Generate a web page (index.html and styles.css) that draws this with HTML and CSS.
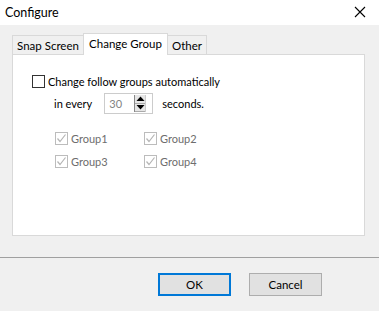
FILE: index.html
```html
<!DOCTYPE html>
<html>
<head>
<meta charset="utf-8">
<link rel="stylesheet" href="styles.css">
</head>
<body>
<div class="window">
  <div class="titlebar">
    <span class="title">Configure</span>
    <svg class="close" width="12" height="12" viewBox="0 0 12 12"><path d="M1 1L11 11M11 1L1 11" stroke="#000" stroke-width="1.1"/></svg>
  </div>
  <div class="content">
    <div class="tabs">
      <div class="tab t1">Snap Screen</div>
      <div class="tab active">Change Group</div>
      <div class="tab t3">Other</div>
    </div>
    <div class="panel">
      <div class="row main-row">
        <span class="cb"></span>
        <span class="label">Change follow groups automatically</span>
      </div>
      <div class="row every-row">
        <span class="label">in every</span>
        <div class="spin">
          <span class="spin-val">30</span>
          <div class="spin-btns">
            <span class="sb"><svg width="9" height="5" viewBox="0 0 9 5"><path d="M0.5 5L4.5 0.5L8.5 5Z" fill="#000"/></svg></span>
            <span class="sb"><svg width="9" height="5" viewBox="0 0 9 5"><path d="M0.5 0L4.5 4.5L8.5 0Z" fill="#000"/></svg></span>
          </div>
        </div>
        <span class="label">seconds.</span>
      </div>
      <div class="groups">
        <div class="g"><span class="cb dis"><svg width="11" height="11" viewBox="0 0 11 11"><path d="M1.5 5.5L4 8.5L9.5 1.5" stroke="#b5b5b5" stroke-width="1.2" fill="none"/></svg></span><span class="glabel">Group1</span></div>
        <div class="g"><span class="cb dis"><svg width="11" height="11" viewBox="0 0 11 11"><path d="M1.5 5.5L4 8.5L9.5 1.5" stroke="#b5b5b5" stroke-width="1.2" fill="none"/></svg></span><span class="glabel">Group2</span></div>
        <div class="g"><span class="cb dis"><svg width="11" height="11" viewBox="0 0 11 11"><path d="M1.5 5.5L4 8.5L9.5 1.5" stroke="#b5b5b5" stroke-width="1.2" fill="none"/></svg></span><span class="glabel">Group3</span></div>
        <div class="g"><span class="cb dis"><svg width="11" height="11" viewBox="0 0 11 11"><path d="M1.5 5.5L4 8.5L9.5 1.5" stroke="#b5b5b5" stroke-width="1.2" fill="none"/></svg></span><span class="glabel">Group4</span></div>
      </div>
    </div>
  </div>
  <div class="footer">
    <button class="btn ok">OK</button>
    <button class="btn">Cancel</button>
  </div>
</div>
</body>
</html>
```

FILE: styles.css
```css
html, body {
  margin: 0;
  padding: 0;
}
body {
  width: 379px;
  height: 311px;
  overflow: hidden;
  background: #f0f0f0;
  font-family: "Lato", "Noto Sans", sans-serif;
  font-size: 11px;
  color: #000;
}
.window {
  display: flex;
  flex-direction: column;
  height: 311px;
}
.titlebar {
  height: 25px;
  background: #fff;
  display: flex;
  align-items: center;
  justify-content: space-between;
  padding: 0 13px 1px 5px;
  box-sizing: border-box;
}
.title {
  font-size: 12.5px;
}
.content {
  padding: 8px 14px 0 12px;
}
.tabs {
  display: flex;
  align-items: flex-end;
  height: 21px;
  position: relative;
  z-index: 1;
}
.tab {
  height: 19px;
  box-sizing: border-box;
  border: 1px solid #d9d9d9;
  border-bottom: none;
  background: #f0f0f0;
  display: flex;
  align-items: center;
  justify-content: center;
  line-height: 1;
  padding-top: 2px;
  font-size: 11.5px;
}
.t1 { width: 71px; border-right: none; }
.t3 { width: 39px; border-left: none; }
.tab.active {
  height: 22px;
  width: 85px;
  background: #fff;
  margin-bottom: -1px;
  padding-top: 0;
  padding-bottom: 2px;
}
.panel {
  height: 182px;
  box-sizing: border-box;
  background: #fff;
  border: 1px solid #d9d9d9;
  position: relative;
  padding: 20px 0 0 19px;
}
.row {
  display: flex;
  align-items: center;
  height: 13px;
}
.cb {
  width: 13px;
  height: 13px;
  box-sizing: border-box;
  border: 1px solid #333;
  background: #fff;
  display: inline-flex;
  align-items: center;
  justify-content: center;
  flex: none;
}
.cb.dis {
  border-color: #bcbcbc;
}
.main-row .label {
  margin-left: 3px;
}
.every-row {
  margin-top: 5px;
  height: 21px;
  padding-left: 22px;
}
.spin {
  margin-left: 12px;
  width: 49px;
  height: 21px;
  box-sizing: border-box;
  border: 1px solid #cccccc;
  display: flex;
  align-items: center;
  justify-content: space-between;
  padding: 0 6px 0 4px;
  margin-right: 9px;
}
.spin-val {
  color: #838383;
}
.spin-btns {
  display: flex;
  flex-direction: column;
  border-left: 1px solid #888;
  border-right: 1px solid #ccc;
  height: 17px;
  width: 12px;
  box-sizing: border-box;
}
.sb {
  flex: 1;
  display: flex;
  align-items: center;
  justify-content: center;
  background: #e6e6e6;
  border-bottom: 1px solid #aaa;
}
.groups {
  display: grid;
  grid-template-columns: 89px 80px;
  grid-auto-rows: 13px;
  row-gap: 10px;
  margin-top: 18px;
  padding-left: 23px;
}
.g {
  display: flex;
  align-items: center;
}
.glabel {
  margin-left: 3px;
  color: #6d6d6d;
}
.footer {
  margin-top: 21px;
  border-top: 1px solid #a0a0a0;
  flex: 1;
  display: flex;
  justify-content: flex-end;
  align-items: flex-start;
  padding: 15px 57px 0 0;
  gap: 18px;
}
.btn {
  width: 73px;
  height: 23px;
  box-sizing: border-box;
  background: #e1e1e1;
  border: 1px solid #adadad;
  font-family: inherit;
  font-size: 11.5px;
  color: #000;
  padding: 0;
  margin: 0;
}
.btn.ok {
  border: 2px solid #0078d7;
}
```
